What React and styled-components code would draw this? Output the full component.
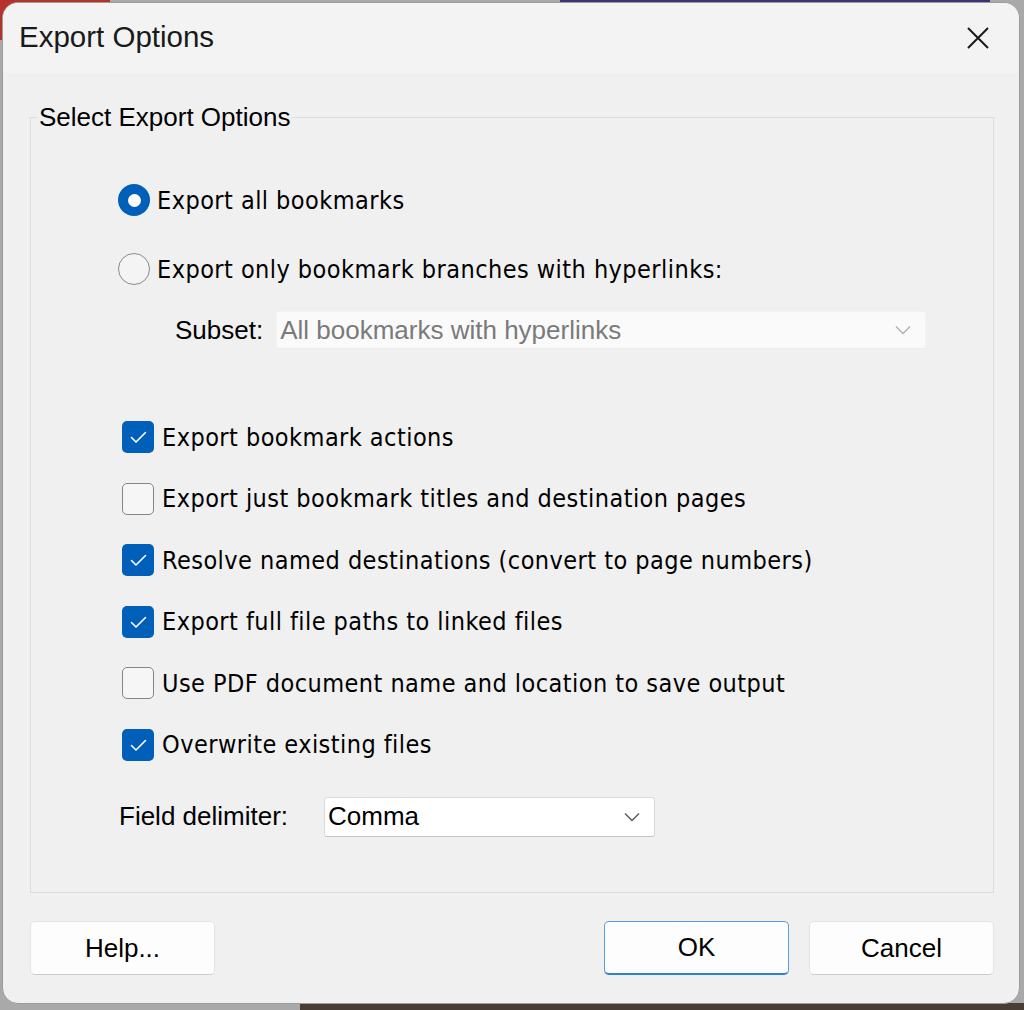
import React from "react";
import styled, { createGlobalStyle } from "styled-components";

const GlobalStyle = createGlobalStyle`
    html, body {
        margin: 0;
        padding: 0;
        height: 100%;
    }
    body {
        background:
            linear-gradient(#b8322c, #b8322c) 0 0 / 110px 40px no-repeat,
            linear-gradient(#3b3472, #3b3472) 560px 0 / 430px 8px no-repeat,
            linear-gradient(#4a3d33, #4a3d33) 300px 1003px / 724px 7px no-repeat,
            #a9a9a9;
        font-family: "Liberation Sans", Arial, sans-serif;
        overflow: hidden;
    }
`

const Dialog = styled.div`
    box-sizing: border-box;
    width: 1018px;
    height: 1002px;
    margin: 2px 0 0 2px;
    background: #f0f0f0;
    border: 1px solid #9c9c9c;
    border-radius: 16px;
    overflow: hidden;
    display: flex;
    flex-direction: column;
`

const TitleBar = styled.div`
    height: 70px;
    flex-shrink: 0;
    background: #f3f3f3;
    display: flex;
    align-items: center;
    justify-content: space-between;
    padding: 0 26px 0 16px;
    box-sizing: border-box;
`

const Title = styled.div`
    font-size: 29.5px;
    color: #1a1a1a;
    margin-top: -2px;
`

const CloseButton = styled.button`
    width: 30px;
    height: 30px;
    padding: 0;
    border: none;
    background: transparent;
    display: flex;
    align-items: center;
    justify-content: center;
`

const Body = styled.div`
    padding: 0 25px 0 27px;
    display: flex;
    flex-direction: column;
`

const Group = styled.fieldset`
    margin: 29px 0 0 0;
    padding: 0 0 55px 0;
    border: 1px solid #dcdcdc;
    min-width: 0;
    height: 791px;
    box-sizing: border-box;
`

const Legend = styled.legend`
    font-size: 26px;
    line-height: 30px;
    color: #000;
    margin-left: 6px;
    padding: 0 2px;
`

const Options = styled.div`
    display: flex;
    flex-direction: column;
    padding-left: 87px;
`

const Row = styled.label`
    display: flex;
    align-items: center;
    height: 40px;
    margin-top: ${p => p.$top}px;
    padding-left: ${p => p.$indent || 0}px;
`

const Radio = styled.span`
    box-sizing: border-box;
    width: 32px;
    height: 32px;
    border-radius: 50%;
    flex-shrink: 0;
    display: flex;
    align-items: center;
    justify-content: center;
    background: ${p => (p.$checked ? "#005fb8" : "#f4f4f4")};
    border: ${p => (p.$checked ? "none" : "1.5px solid #8a8a8a")};
    &::after {
        content: "";
        display: ${p => (p.$checked ? "block" : "none")};
        width: 13px;
        height: 13px;
        border-radius: 50%;
        background: #fff;
    }
`

const Box = styled.span`
    box-sizing: border-box;
    width: 32px;
    height: 32px;
    border-radius: 5px;
    flex-shrink: 0;
    display: flex;
    align-items: center;
    justify-content: center;
    background: ${p => (p.$checked ? "#005fb8" : "#f6f6f6")};
    border: ${p => (p.$checked ? "none" : "1.5px solid #858585")};
`

const OptionText = styled.span`
    font-family: "DejaVu Sans Condensed", "DejaVu Sans", sans-serif;
    font-size: 25px;
    letter-spacing: 0.45px;
    color: #000;
    margin-left: ${p => p.$gap}px;
    white-space: nowrap;
`

const FieldLabel = styled.span`
    font-size: 26px;
    color: #000;
    white-space: nowrap;
    margin-right: ${p => p.$gap}px;
`

const Select = styled.div`
    box-sizing: border-box;
    width: ${p => p.$width}px;
    height: ${p => p.$height}px;
    display: flex;
    align-items: center;
    justify-content: space-between;
    padding: 0 14px 0 3px;
    font-size: 26px;
    background: ${p => (p.$disabled ? "#fafafa" : "#fff")};
    color: ${p => (p.$disabled ? "#7a7a7a" : "#000")};
    border: 1px solid ${p => (p.$disabled ? "#f3f3f3" : "#dadada")};
    border-bottom-color: ${p => (p.$disabled ? "#ececec" : "#c4c4c4")};
    border-radius: 3px;
`

const Footer = styled.div`
    display: flex;
    align-items: center;
    gap: 20px;
    margin-top: 28px;
`

const Button = styled.button`
    box-sizing: border-box;
    width: 185px;
    height: 54px;
    font-family: "Liberation Sans", Arial, sans-serif;
    font-size: 26px;
    color: #000;
    background: #fdfdfd;
    border: 1px solid ${p => (p.$primary ? "#5a9de0" : "#e3e3e3")};
    border-bottom: ${p => (p.$primary ? "2px solid #2f7fd2" : "1px solid #cccccc")};
    border-radius: 5px;
    margin-right: ${p => (p.$push ? "auto" : "0")};
    padding: 0;
`

function Chevron({ color }) {
    return (
        <svg width="16" height="10" viewBox="0 0 16 10">
            <path d="M1 1.5 L8 8.5 L15 1.5" fill="none" stroke={color} strokeWidth="1.3" />
        </svg>
    );
}

function Check() {
    return (
        <svg width="32" height="32" viewBox="0 0 32 32">
            <path d="M9.5 16.5 L14 21 L23.5 11.5" fill="none" stroke="#fff" strokeWidth="1.6" strokeLinecap="round" strokeLinejoin="round" />
        </svg>
    );
}

const checks = [
    { text: "Export bookmark actions", checked: true },
    { text: "Export just bookmark titles and destination pages", checked: false },
    { text: "Resolve named destinations (convert to page numbers)", checked: true },
    { text: "Export full file paths to linked files", checked: true },
    { text: "Use PDF document name and location to save output", checked: false },
    { text: "Overwrite existing files", checked: true },
];

export default function App() {
    return (
        <>
            <GlobalStyle />
            <Dialog>
                <TitleBar>
                    <Title>Export Options</Title>
                    <CloseButton>
                        <svg width="24" height="24" viewBox="0 0 24 24">
                            <path d="M2 2 L22 22 M22 2 L2 22" stroke="#1a1a1a" strokeWidth="2" />
                        </svg>
                    </CloseButton>
                </TitleBar>
                <Body>
                    <Group>
                        <Legend>Select Export Options</Legend>
                        <Options>
                            <Row $top={48}>
                                <Radio $checked />
                                <OptionText $gap={7}>Export all bookmarks</OptionText>
                            </Row>
                            <Row $top={29}>
                                <Radio />
                                <OptionText $gap={7}>Export only bookmark branches with hyperlinks:</OptionText>
                            </Row>
                            <Row $top={21} $indent={57}>
                                <FieldLabel $gap={13}>Subset:</FieldLabel>
                                <Select $width={650} $height={38} $disabled>
                                    All bookmarks with hyperlinks
                                    <Chevron color="#b0b0b0" />
                                </Select>
                            </Row>
                            {checks.map((c, i) => (
                                <Row key={c.text} $top={i === 0 ? 67 : 21.6} $indent={4}>
                                    <Box $checked={c.checked}>{c.checked && <Check />}</Box>
                                    <OptionText $gap={8}>{c.text}</OptionText>
                                </Row>
                            ))}
                            <Row $top={32} $indent={1}>
                                <FieldLabel $gap={36}>Field delimiter:</FieldLabel>
                                <Select $width={331} $height={40}>
                                    Comma
                                    <Chevron color="#555" />
                                </Select>
                            </Row>
                        </Options>
                    </Group>
                    <Footer>
                        <Button $push>Help...</Button>
                        <Button $primary>OK</Button>
                        <Button>Cancel</Button>
                    </Footer>
                </Body>
            </Dialog>
        </>
    );
}
